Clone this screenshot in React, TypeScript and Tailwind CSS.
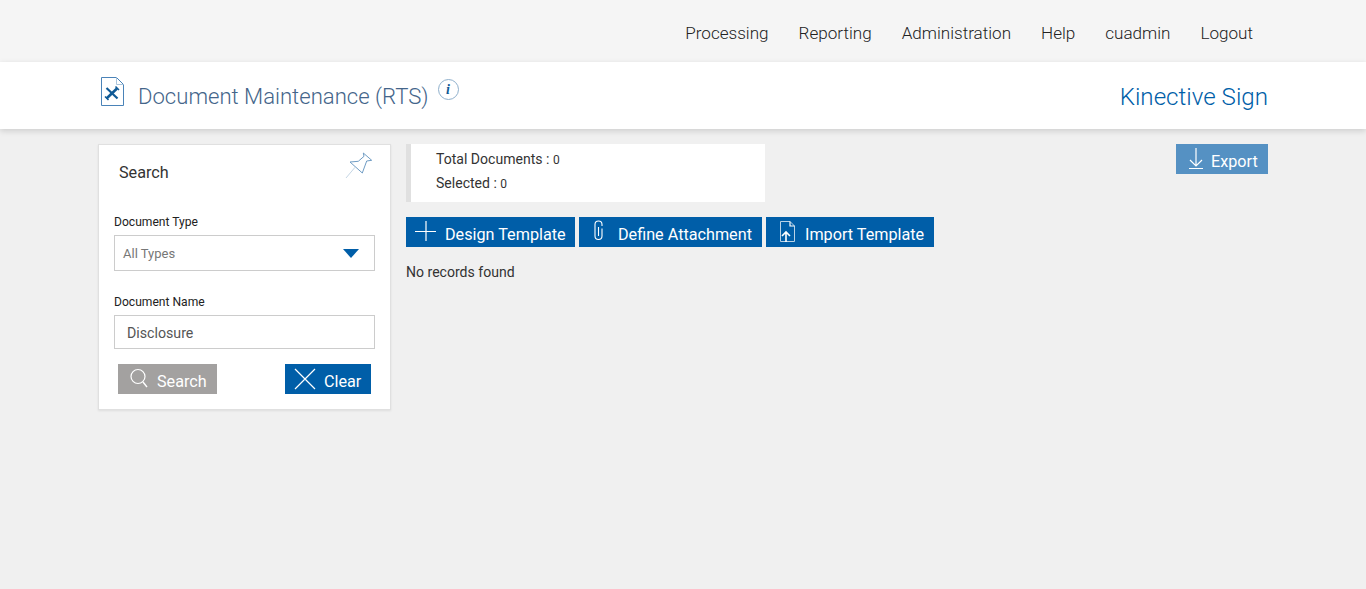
import React from "react";

function Btn({ bg = "bg-[#005ea8]", icon, label, className = "" }: { bg?: string; icon: React.ReactNode; label: string; className?: string }) {
  return (
    <div className={`h-[30px] flex text-white text-[16.2px] font-normal ${bg} ${className}`}>
      {icon}
      <span className="leading-[35px] whitespace-nowrap">{label}</span>
    </div>
  );
}

const navItems: [string, string][] = [
  ["Processing", "mr-[30px]"],
  ["Reporting", "mr-[30px]"],
  ["Administration", "mr-[30px]"],
  ["Help", "mr-[30px]"],
  ["cuadmin", "mr-[30px]"],
  ["Logout", ""],
];

export default function App() {
  return (
    <div className="min-h-[589px] bg-[#f0f0f0] text-[#333] font-['Roboto',sans-serif]">
      <div className="h-[62px] bg-[#f5f5f5] flex justify-end items-center pr-[113px] pt-[5px]">
        {navItems.map(([n, c]) => (
          <span key={n} className={`text-[17.08px] font-light text-[#222] ${c}`}>{n}</span>
        ))}
      </div>
      <div className="h-[67px] bg-white shadow-[0_2px_6px_rgba(0,0,0,0.15)] relative pl-[100px] pr-[98px] flex">
        <svg width="25" height="30" viewBox="0 0 25 30" className="mt-[15px] shrink-0" fill="none">
          <path d="M1.5 0.5H16.5L23.5 7.5V28.5H1.5Z" stroke="#4a83b8" strokeWidth="1" fill="#fff" />
          <path d="M16.5 0.5V7.5H23.5" stroke="#a9c4dc" strokeWidth="1" />
          <path d="M6.5 21.5L17 11.5" stroke="#0f5a96" strokeWidth="2.6" />
          <path d="M6.5 11L17.5 21.5" stroke="#0f5a96" strokeWidth="2.2" />
          <path d="M15.5 9.5L19 13M5 19.5L8.5 23" stroke="#0f5a96" strokeWidth="1.5" />
        </svg>
        <span className="ml-[13px] mt-[18px] text-[22.1px] leading-[32px] font-light text-[#44658a] whitespace-nowrap">Document Maintenance (RTS)</span>
        <div className="ml-[9px] mt-[17px] w-[21px] h-[21px] rounded-full border border-[#8fb0cc] flex items-center justify-center text-[#0f5a96] text-[14px] font-bold italic font-['Liberation_Serif',serif]">i</div>
        <span className="ml-auto mt-[18px] text-[24.15px] leading-[34px] font-light text-[#005ea8] whitespace-nowrap">Kinective Sign</span>
      </div>
      <div className="flex pl-[98px] pr-[98px] pt-[15px] items-start">
        <div className="w-[293px] h-[266px] bg-white border border-[#e0e0e0] shadow-[0_1px_2px_rgba(0,0,0,0.08)] relative shrink-0 pl-[15px] pr-[15px]">
          <div className="pl-[5px] pt-[18px] text-[16.2px] leading-[19px] text-[#333]">Search</div>
          <svg width="28" height="30" viewBox="0 0 28 30" fill="none" className="absolute right-[17px] top-[5px]">
            <path d="M18.3 3L26.7 10.3L21.7 11L17.3 23L5 12L13.3 11.3L19 6.3Z" stroke="#6f9cc4" strokeWidth="1" fill="#fff" />
            <path d="M10 17.3L1 28" stroke="#c5d6e5" strokeWidth="1" />
          </svg>
          <div className="mt-[32px] text-[12.1px] leading-[16px] text-[#222]">Document Type</div>
          <div className="mt-[5px] h-[36px] w-[261px] border border-[#ccc] flex items-center pl-[8px] pr-[15px] justify-between">
            <span className="text-[13px] text-[#777] pt-[2px]">All Types</span>
            <svg width="16" height="9" viewBox="0 0 16 9"><path d="M0 0H16L8 9Z" fill="#005ea8" /></svg>
          </div>
          <div className="mt-[23px] text-[12.1px] leading-[16px] text-[#222]">Document Name</div>
          <div className="mt-[5px] h-[34px] w-[261px] border border-[#ccc] flex items-center pl-[12px]">
            <span className="text-[14.2px] text-[#555] pt-[3px]">Disclosure</span>
          </div>
          <div className="mt-[15px] flex justify-between pl-[4px] pr-[4px]">
            <Btn
              bg="bg-[#a3a1a0]"
              label="Search"
              className="w-[99px]"
              icon={
                <svg width="39" height="30" viewBox="0 0 39 30" fill="none" className="shrink-0">
                  <circle cx="20" cy="12.5" r="7" stroke="#fff" strokeWidth="1.2" />
                  <path d="M25 18L29 23" stroke="#fff" strokeWidth="1.4" />
                </svg>
              }
            />
            <Btn
              label="Clear"
              className="w-[86px]"
              icon={
                <svg width="39" height="30" viewBox="0 0 39 30" fill="none" className="shrink-0">
                  <path d="M10 5L30 25M30 5L10 25" stroke="#fff" strokeWidth="1.2" />
                </svg>
              }
            />
          </div>
        </div>
        <div className="ml-[15px] flex-1 min-w-0">
          <div className="flex justify-between items-start">
            <div className="w-[359px] h-[58px] bg-white border-l-[5px] border-[#e0e0e0] pl-[25px] pt-[3px] text-[14.05px] leading-[24px] text-[#333]">
              <div className="h-[24px]">Total Documents : <span className="text-[12px] leading-none">0</span></div>
              <div className="h-[24px]">Selected : <span className="text-[12px] leading-none">0</span></div>
            </div>
            <Btn
              bg="bg-[#5591c3]"
              label="Export"
              className="w-[92px]"
              icon={
                <svg width="35" height="30" viewBox="0 0 35 30" fill="none" className="shrink-0">
                  <path d="M20 4V22M14 16L20 22L26 16M13 24.5H27" stroke="#fff" strokeWidth="1.2" />
                </svg>
              }
            />
          </div>
          <div className="mt-[15px] flex gap-[4px]">
            <Btn
              label="Design Template"
              className="w-[169px]"
              icon={
                <svg width="39" height="30" viewBox="0 0 39 30" fill="none" className="shrink-0">
                  <path d="M20 4V24M9 14.5H30" stroke="#fff" strokeWidth="1.2" />
                </svg>
              }
            />
            <Btn
              label="Define Attachment"
              className="w-[183px]"
              icon={
                <svg width="39" height="30" viewBox="0 0 39 30" fill="none" className="shrink-0">
                  <path d="M23 9V7.5a3.5 3.5 0 0 0-7 0V19a3.5 3.5 0 0 0 7 0V11.5M19.5 10V19" stroke="#fff" strokeWidth="1.1" />
                </svg>
              }
            />
            <Btn
              label="Import Template"
              className="w-[168px]"
              icon={
                <svg width="39" height="30" viewBox="0 0 39 30" fill="none" className="shrink-0">
                  <path d="M14.5 4.5H24L28.5 9V24.5H14.5Z" stroke="#b9d2e6" strokeWidth="1" />
                  <path d="M24 4.5V9H28.5" stroke="#fff" strokeWidth="1.2" />
                  <path d="M20 25V15M16 19L20 15L24 19" stroke="#fff" strokeWidth="1.6" />
                </svg>
              }
            />
          </div>
          <div className="mt-[16px] text-[14.05px] leading-[18px] text-[#333]">No records found</div>
        </div>
      </div>
    </div>
  );
}
